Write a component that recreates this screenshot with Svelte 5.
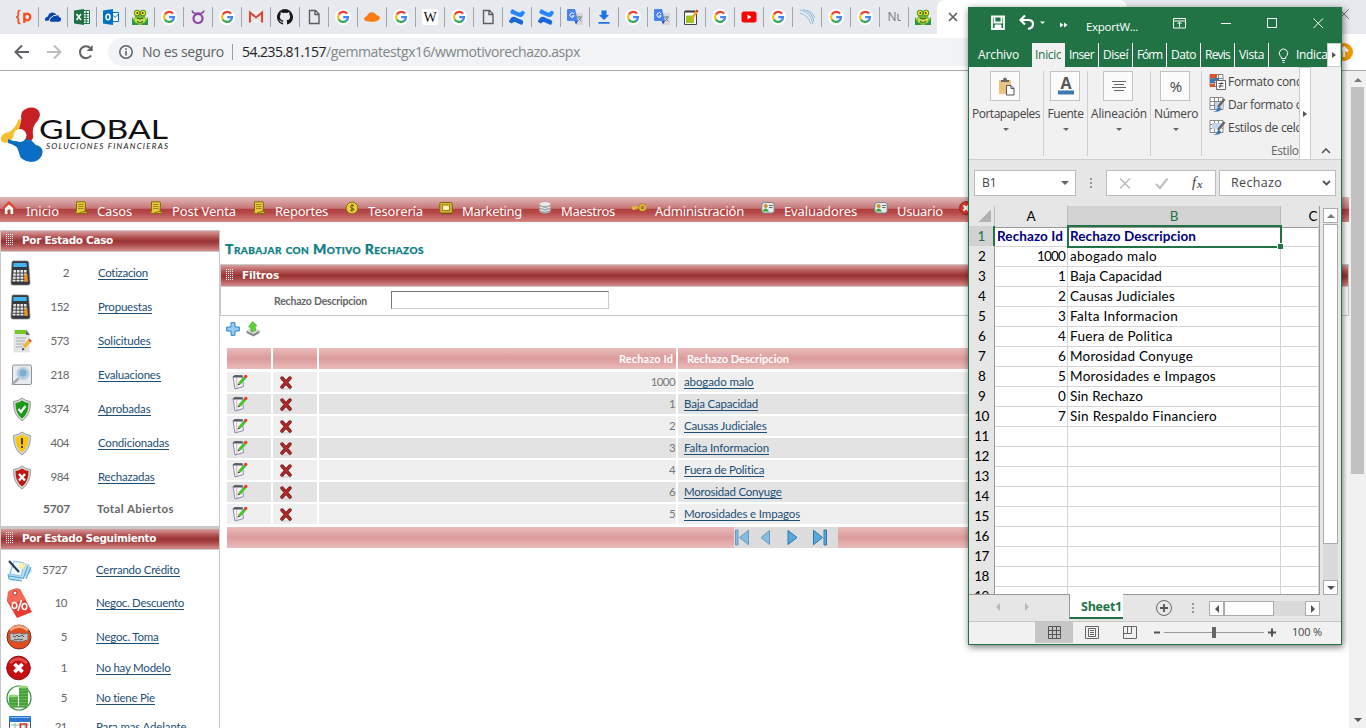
<script>
  const tabs = ['p', 'cloud', 'excel', 'outlook', 'frog', 'g', 'gene', 'g', 'gmail', 'github', 'file', 'g', 'flare', 'g', 'wiki', 'g', 'file', 'conf', 'conf', 'trans', 'down', 'g', 'trans', 'notes', 'g', 'tube', 'g', 'lines', 'g', 'g', 'nu', 'frog'];
  const menu = [
    ['home', 'Inicio', 33], ['scroll', 'Casos', 35], ['scroll', 'Post Venta', 64], ['scroll', 'Reportes', 53],
    ['coin', 'Tesorería', 55], ['screen', 'Marketing', 60], ['db', 'Maestros', 54], ['key', 'Administración', 89],
    ['card', 'Evaluadores', 73], ['card', 'Usuario', 46], ['exit', '', 0]
  ];
  const casos = [
    ['calc', '2', 'Cotizacion', 50], ['calc', '152', 'Propuestas', 54], ['doc', '573', 'Solicitudes', 52.5],
    ['search', '218', 'Evaluaciones', 62.5], ['ok', '3374', 'Aprobadas', 52.5], ['warn', '404', 'Condicionadas', 71],
    ['bad', '984', 'Rechazadas', 56.5]
  ];
  const seguimiento = [
    ['pen', '5727', 'Cerrando Crédito', 83.5], ['tag', '10', 'Negoc. Descuento', 88], ['deal', '5', 'Negoc. Toma', 62.5],
    ['cross', '1', 'No hay Modelo', 74.5], ['money', '5', 'No tiene Pie', 59], ['cal', '21', 'Para mas Adelante', 90.5]
  ];
  const rechazos = [
    ['1000', 'abogado malo', 69.5, 87], ['1', 'Baja Capacidad', 74, 92], ['2', 'Causas Judiciales', 82.5, 105],
    ['3', 'Falta Informacion', 85, 108], ['4', 'Fuera de Politica', 80.5, 103], ['6', 'Morosidad Conyuge', 97.5, 123],
    ['5', 'Morosidades e Impagos', 116, 146], ['0', 'Sin Rechazo', 0, 73], ['7', 'Sin Respaldo Financiero', 0, 147]
  ];
  const ribbonTabs = ['Inser', 'Diseí', 'Fórm', 'Dato', 'Revis', 'Vista'];
  const groups = [
    ['paste', 'Portapapeles', 68], ['font', 'Fuente', 36], ['align', 'Alineación', 56], ['pct', 'Número', 44]
  ];
  const estilos = [['cond', 'Formato cond', 75], ['table', 'Dar formato co', 80], ['cell', 'Estilos de celda', 81]];
  const sheetRows = Array.from({ length: 19 }, (_, i) => i + 1);

  // Spreads the letters of a label so that it takes the given width.
  function fit(node, width) {
    const natural = node.getBoundingClientRect().width;
    const n = node.textContent.length;
    if (n && width) node.style.letterSpacing = (width - natural) / n + 'px';
  }
</script>

{#snippet fav(name)}
  {#if name === 'nu'}
    <span class="nu">Nu</span>
  {:else}
  <svg class="fav" viewBox="0 0 16 16">
    {#if name === 'p'}
      <path d="M4.5 1.5H4Q2.3 1.5 2.3 3.3V6Q2.3 7.5.7 8Q2.3 8.500 2.300 10V12.700Q2.300 14.500 4 14.500H4.500" fill="none" stroke="#f4511e" stroke-width="1.700" />
      <path d="M8.300 14V3.700M8.300 7.500a3 3.300 0 1 1 0 1" fill="none" stroke="#f4511e" stroke-width="2.300" />
    {:else if name === 'cloud'}
      <path d="M0 11.500Q-.5 8 3 7.500Q3.500 4 7 3.500Q10 3 11.500 6Q14 6 14 8Q16.500 8.500 16 11Q15.500 12.800 14 12.800H6Q4.500 12.500 4.800 10.500Q3 12.500 0 11.500Z" fill="#0a45ac" />
      <path d="M4.700 11Q4.500 8.500 7 8Q8.500 5.500 11.500 6.500" fill="none" stroke="#e7eaed" />
    {:else if name === 'excel'}
      <path d="M9 1.500h6.500v13H9z" fill="#fff" stroke="#1e7145" /><path d="M10 4.500h4.500M10 7h4.500M10 9.500h4.500M10 12h4.500M12.200 2v12" stroke="#1e7145" /><path d="M0 1.500 10 0v16L0 14.500z" fill="#1e7145" /><path d="m2.500 5 4.500 6M7 5l-4.500 6" stroke="#fff" stroke-width="1.500" />
    {:else if name === 'outlook'}
      <path d="M9 3.500h6.500v9H9z" fill="#fff" stroke="#0072c6" /><path d="m9 5.500 3 3 4-4" fill="none" stroke="#0072c6" /><path d="M0 1.500 10 0v16L0 14.500z" fill="#0072c6" /><ellipse cx="5" cy="8" rx="2" ry="2.700" fill="none" stroke="#fff" stroke-width="1.500" />
    {:else if name === 'frog'}
      <path d="M3 2h10v6l3 3v5H0v-5l3-3z" fill="#78b72b" /><path d="m0 8 6 8H0zM16 8l-6 8h6z" fill="#2c9445" /><path d="M1 9.500 4 14M15 9.500 12 14" stroke="#8fdc3c" /><path d="M2 8q6 5 12 0l-2 6-2-2-2 4-2-4-2 2z" fill="#d3dc4c" /><circle cx="5" cy="4" r="3.200" fill="#4e9a28" /><circle cx="11" cy="4" r="3.200" fill="#4e9a28" /><circle cx="5" cy="4" r="2.200" fill="#ffe11c" /><circle cx="11" cy="4" r="2.200" fill="#ffe11c" /><circle cx="5.300" cy="4" r=".9" fill="#332" /><circle cx="10.700" cy="4" r=".9" fill="#332" /><path d="M5 9q3 2 6 0M5 12l3 2 3-2" stroke="#27692c" fill="none" />
    {:else if name === 'g'}
      <circle cx="8" cy="8" r="8" fill="#fff" /><path d="M12.100 4.600A5 5 0 0 0 3.800 5.500" fill="none" stroke="#ea4335" stroke-width="2.200" /><path d="M3.800 5.500A5 5 0 0 0 3.800 10.600" fill="none" stroke="#fbbc05" stroke-width="2.200" /><path d="M3.800 10.500A5 5 0 0 0 11.400 11.700" fill="none" stroke="#34a853" stroke-width="2.200" /><path d="M8.200 8.200H13Q13 10.300 11.300 11.700" fill="none" stroke="#4285f4" stroke-width="2.200" />
    {:else if name === 'gene'}
      <circle cx="8" cy="9.500" r="4.500" fill="none" stroke="#8b47a8" stroke-width="2.200" /><path d="M2 1.500Q2.500 4 5 4.500M14 1.500Q13.500 4 11 4.500M5 4.500q3-1 6 0" stroke="#8b47a8" stroke-width="1.600" fill="none" />
    {:else if name === 'gmail'}
      <path d="M1 2.500h14v11H1z" fill="#f4f4f4" /><path d="M2 13.500V3.500l6 5 6-5v10" fill="none" stroke="#d54b3d" stroke-width="2.200" /><path d="m3 13 4-5M13 13 9 8" stroke="#ccc" />
    {:else if name === 'github'}
      <path d="M8 0a8 8 0 0 0-2.500 15.600c.4 0 .5-.2.500-.5v-1.500c-2.200.5-2.700-1-2.700-1-.4-.9-.9-1.100-.9-1.100-.7-.5.1-.5.1-.5.8.1 1.200.8 1.200.8.700 1.300 1.900.9 2.300.7 0-.5.300-.9.500-1.100C4.700 11.200 2.900 10.500 2.900 7.500c0-.9.300-1.600.8-2.100-.1-.2-.4-1 .1-2.200 0 0 .7-.2 2.200.8a8 8 0 0 1 4 0c1.500-1 2.200-.8 2.200-.8.500 1.200.2 2 .1 2.200.5.500.8 1.200.8 2.100 0 3-1.800 3.700-3.600 3.900.3.200.5.700.5 1.500v2.200c0 .3.100.5.500.5A8 8 0 0 0 8 0Z" fill="#191717" />
    {:else if name === 'file'}
      <path d="M3.500 1.500h6l3.500 3.500v9.500H3.500zM9 1.500V5.500h4" fill="none" stroke="#5a5f63" stroke-width="1.400" />
    {:else if name === 'flare'}
      <path d="M0 9.500Q.5 7.500 3 7Q4.500 3 8 3.200Q11 3.300 12.500 6Q15.500 6.500 16 9Q15.500 12 9 12.800Q5 13 2 12Q0 11 0 9.500Z" fill="#fb7a12" />
    {:else if name === 'wiki'}
      <rect width="16" height="16" rx="2" fill="#fff" /><text x="8" y="12.500" class="w">W</text>
    {:else if name === 'conf'}
      <path d="M0 12 2 9Q4 6.500 8 9L13 11Q15 12 14 14L13 16Q8 14 6 13Q4 12.500 3 14.500L0 13Z" fill="#1868db" /><path d="M16 3.500 14 7Q12 9 8 7L2 4.500Q1 4 1.500 2.500L3 0Q8 2.500 10 3.500Q12 4 13 1.500L16 3Z" fill="#2684ff" />
    {:else if name === 'trans'}
      <path d="M5 4h11v12H9z" fill="#d5d7db" /><path d="M1 0h7l3 12H1Q0 12 0 11V1Q0 0 1 0Z" fill="#4a83ee" /><path d="M7.500 12h3.500L9 15.500z" fill="#3352ab" /><path d="M7 4.800a2.200 2.200 0 1 0 .2 2H5.200" fill="none" stroke="#fff" /><path d="M10 8h5M12.500 7v1M14 8q-1 3-3 4M11.500 9q1 2 3 3" fill="none" stroke="#788" />
    {:else if name === 'down'}
      <path d="M5.500 1.500h5V6H13L8 11 3 6h2.500zM2.500 13h11v1.700h-11z" fill="#1a73e8" />
    {:else if name === 'notes'}
      <path d="M1.500 2.500h12v13h-12z" fill="#fff" stroke="#444" /><path d="M3 6.500h8v7.500H3z" fill="#9cc51e" /><path d="M3 1v3M5 1v3M7 1v3M9 1v3M11 1v3" stroke="#333" /><path d="m8 11 6-9" stroke="#e9a82c" stroke-width="2.500" /><path d="m13.500 2.700 1-1.500" stroke="#b33" stroke-width="2.500" />
    {:else if name === 'tube'}
      <rect x=".5" y="2.500" width="15" height="11" rx="2.500" fill="#f00" /><path d="M6.500 5.500v5l4-2.500z" fill="#fff" />
    {:else if name === 'lines'}
      <path d="M1 1q11 2 13 14M4 .5q9 2 11 12M1 4q8 2 11 11M8 1q6 2 8 8" fill="none" stroke="#6fabd6" stroke-width=".7" />
    {/if}
  </svg>
  {/if}
{/snippet}

{#snippet micon(name)}
  <svg class="micon" viewBox="0 0 14 14">
    {#if name === 'home'}
      <path d="M1.500 7v6.500h9V7L6 3z" fill="#fff" stroke="#a44" stroke-width=".7" /><path d="M.3 7.200 6 1.500l6 5.700" fill="none" stroke="#e2492c" stroke-width="2.200" stroke-linecap="round" /><path d="M4.500 8.500h3v5h-3z" fill="#b0442f" />
    {:else if name === 'scroll'}
      <path d="M2.500.8h7.500q2 0 1.500 2L11 10.500q2.500 0 2.300 2H4.500q-3 0-3-1.500l1-1z" fill="#e3c93a" stroke="#85680d" /><path d="M4 3.500h5.500M4 5.500h5.500M4 7.500h5.500" stroke="#a5861b" /><path d="M4.500 12.500q2-1.500 6.500-2" stroke="#8a6f11" fill="none" />
    {:else if name === 'coin'}
      <circle cx="7" cy="7" r="5.800" fill="#e9cf3c" stroke="#8f7412" /><path d="M9 4.500Q5.500 3.500 5.500 5.500T8.500 8T5 9.500M7 3v8" stroke="#6d5811" fill="none" />
    {:else if name === 'screen'}
      <rect x=".8" y="1.500" width="12.400" height="10.500" rx="1.500" fill="#d9b82f" stroke="#80640e" /><rect x="3.500" y="4" width="7" height="5.500" fill="#fdf1b5" stroke="#9a7b19" /><path d="M2 12.800h10" stroke="#6b541a" />
    {:else if name === 'db'}
      <path d="M1.500 3v8q5.500 3.500 11 0V3z" fill="#a4a8ab" /><ellipse cx="7" cy="3" rx="5.500" ry="2" fill="#e7eaeb" /><path d="M1.500 6q5.500 3 11 0M1.500 8.700q5.500 3 11 0" fill="none" stroke="#eee" />
    {:else if name === 'key'}
      <path d="M0 6.500h8M1.500 7v2M3.500 7v1.500" stroke="#e2bb35" stroke-width="2" /><circle cx="10.500" cy="6.500" r="2.600" fill="none" stroke="#8f6f16" stroke-width="3" /><circle cx="10.500" cy="6.500" r="2.600" fill="none" stroke="#e2bb35" stroke-width="1.800" />
    {:else if name === 'card'}
      <rect x=".8" y="1.500" width="12.400" height="10.500" rx="2.500" fill="#e7ebed" stroke="#76838a" /><circle cx="4.700" cy="5" r="2" fill="#c79332" /><path d="M1.500 10.500q3-6 6.500 0z" fill="#3aa22e" /><path d="M8 4.500h4M8 6.500h3.500" stroke="#68747b" />
    {:else if name === 'exit'}
      <circle cx="7" cy="7" r="6.300" fill="#dc3a2b" stroke="#8e1f18" /><path d="m4.500 4.500 5 5m0-5-5 5" stroke="#fff" stroke-width="2" />
    {/if}
  </svg>
{/snippet}

{#snippet big(name)}
  <svg class="big" viewBox="0 0 26 28">
    {#if name === 'calc'}
      <path d="M7 2h14q1.500 0 1.600 1.500L24 24q0 2-2 2H7q-2 0-2-2L6 3.500Q6 2 7 2z" fill="#36383b" stroke="#77797c" stroke-width=".7" /><path d="M7.500 4h13l.3 4H7.200z" fill="#43b4ee" /><path d="M7.500 11h13l.8 11.500H6.500z" fill="#e8e8e8" /><path d="M7 14h14.500M6.500 17.200h15M6.500 20.300h15M10.500 11 10 23M14 11v12M17.500 11l.5 12" stroke="#36383b" stroke-width=".9" /><path d="M18.500 15.500h3l.4 7h-3.400z" fill="#f28c17" />
    {:else if name === 'doc'}
      <path d="M8 3h13l2 3v19H8z" fill="#e4e5e7" stroke="#d0d1d4" stroke-width=".5" /><path d="M9 3h11v4H9z" fill="#78c623" /><path d="m20 3 4 5h-4z" fill="#667" /><path d="M10 11h10M10 14h9M10 17h8M10 20h6" stroke="#a9acb3" /><path d="m18 20 5.500-6" stroke="#f3b52d" stroke-width="3.500" /><path d="m23.300 14.300 1.400-1.500" stroke="#e05246" stroke-width="3.500" /><path d="m16 23.500.7-3 2 2z" fill="#333" />
    {:else if name === 'search'}
      <rect x="6.500" y="4" width="19" height="19.500" rx="1.500" fill="#e7eaee" stroke="#8d9499" /><path d="M6.500 23 12 18" stroke="#a6acb1" stroke-width="2.500" stroke-linecap="round" /><circle cx="17" cy="12.500" r="5.800" fill="#a8cde4" stroke="#c0d0da" stroke-width="1.500" /><circle cx="17" cy="12" r="3.500" fill="#7eaece" />
    {:else if name === 'ok' || name === 'warn' || name === 'bad'}
      <path d="M16 3q3.500 3 8.500 3.500Q25 20 16 26Q7 20 7.500 6.500Q12.500 6 16 3Z" fill="#d5d6d7" stroke="#88898b" stroke-width=".8" /><path d="M16 5.500q3 2 6.500 2.500Q22.800 18.500 16 23.500Q9.200 18.500 9.500 8Q13 7.500 16 5.500Z" fill={name === 'ok' ? '#1c9a17' : name === 'warn' ? '#f6c613' : '#bb1714'} />
      {#if name === 'ok'}<path d="m12.500 14 2.500 3 4.500-6" fill="none" stroke="#fff" stroke-width="2.200" />
      {:else if name === 'warn'}<path d="M16 9v6.500M16 17v2" stroke="#3a2f14" stroke-width="1.800" />
      {:else}<path d="m13 11 6 6.500m0-6.500-6 6.500" stroke="#fff" stroke-width="2.500" />{/if}
    {/if}
  </svg>
{/snippet}

{#snippet seg(name)}
  <svg class="seg" viewBox="0 0 28 32">
    {#if name === 'pen'}
      <path d="M4 22 9 8l16 2 3 7-8 8-12 2z" fill="#b6ddf2" /><path d="m6 20 4-13 10 2-3 13z" fill="#eff8fd" stroke="#8fc0dd" /><path d="m5 22 13 2M19 25l5-13M22 25l5-12M4 20l1 5 13 2" stroke="#489fce" fill="none" /><path d="m16 9 5 1-1 5-5-1z" fill="#f9f0a0" /><path d="m5 7 10 11" stroke="#24394e" stroke-width="2" />
    {:else if name === 'tag'}
      <path d="M4 5q7-5 12-3l12 23-15 6L3 14z" fill="#e93c31" /><path d="M4 5q7-5 12-3l6 11-18 4z" fill="#f26a56" /><circle cx="11" cy="6" r="2" fill="#fff" stroke="#a33" /><ellipse cx="10.500" cy="18.500" rx="2.300" ry="3" fill="none" stroke="#fff" stroke-width="1.600" /><ellipse cx="20.500" cy="19.500" rx="2.300" ry="3" fill="none" stroke="#fff" stroke-width="1.600" /><path d="m14 24 3.500-11" stroke="#fff" stroke-width="1.700" />
    {:else if name === 'deal'}
      <circle cx="15" cy="16" r="12" fill="#e04d20" stroke="#822b18" /><path d="M6 9q9-7 18 0" stroke="#f7a57f" stroke-width="3" fill="none" /><path d="m6 12 4 1 5-1 5 1 4-1v7l-4 1-5 1-5-1-4-1z" fill="#c4c4c4" stroke="#666" stroke-width=".8" /><path d="m9 15 2 1 2-2 2 2 3-2 2 2M10 18l2 1 2-1 2 1 3-1" stroke="#444" stroke-width=".9" fill="none" />
    {:else if name === 'cross'}
      <circle cx="14.500" cy="16" r="11.800" fill="#c40f13" stroke="#871014" /><path d="M6 11q8-8 17 0" fill="none" stroke="#e34b48" stroke-width="3" /><path d="m10.500 12 8 8m0-8-8 8" stroke="#fff" stroke-width="3.800" />
    {:else if name === 'money'}
      <circle cx="15" cy="16" r="12" fill="#fff" stroke="#368e37" stroke-width="1.200" /><path d="M5 15h9v10H5zM15 6h9v19h-9z" fill="#67bd4f" /><path d="M5 16h9M5 19h9M6 22h8M15 7h9M15 10h9M15 13h9M15 16h9M15 19h9M15 22h9M7 25h16" stroke="#26812b" /><ellipse cx="9.500" cy="14" rx="5" ry="1.500" fill="#94d779" /><ellipse cx="19.500" cy="5" rx="4.500" ry="1.500" fill="#94d779" />
    {:else if name === 'cal'}
      <rect x="5.500" y="6" width="21" height="23" rx="2" fill="#fff" stroke="#456" /><path d="M5 5h22v6H5z" fill="#2a75d0" /><path d="M6 6.500h20" stroke="#83bdf2" /><path d="M7 14h18M7 18h18M11 12v12M16 12v12M21 12v12" stroke="#8ba" /><path d="M16.500 13h6v5h-6z" fill="none" stroke="#d33" stroke-width="1.500" />
    {/if}
  </svg>
{/snippet}

{#snippet dots()}
  <svg class="dots" viewBox="0 0 8 12"><path d="M.5 0v12M2.500 0v12M4.500 0v12M6.500 0v12" stroke="#fbeeee" stroke-dasharray="1 1" /></svg>
{/snippet}

<div class="screen">
  <div class="strip">
    {#each tabs as t}<div class="tab">{@render fav(t)}</div>{/each}
    <div class="active"><svg width="10" height="10" viewBox="0 0 10 10"><path d="m1 1 8 8m0-8-8 8" stroke="#5f6368" stroke-width="1.700" /></svg></div>
    <svg class="winx" viewBox="0 0 10 10"><path d="m0 0 10 10m0-10L0 10" stroke="#777" /></svg>
  </div>
  <div class="toolbar">
    <svg class="nav" viewBox="0 0 16 16"><path d="M15 8H2M8 1.500 1.500 8 8 14.500" fill="none" stroke="#5f6368" stroke-width="2" /></svg>
    <svg class="nav" viewBox="0 0 16 16"><path d="M1 8h13M8 1.500 14.500 8 8 14.500" fill="none" stroke="#bbbdc0" stroke-width="2" /></svg>
    <svg class="nav" viewBox="0 0 16 16"><path d="M13 11.500A6 6 0 1 1 12.500 4.200" fill="none" stroke="#5f6368" stroke-width="2" /><path d="M14.700 1v6h-6z" fill="#5f6368" /></svg>
    <div class="pill">
      <svg width="14" height="14" viewBox="0 0 14 14"><circle cx="7" cy="7" r="6.200" fill="none" stroke="#5f6368" stroke-width="1.500" /><path d="M7 6v4.500M7 3.300v1.600" stroke="#5f6368" stroke-width="1.600" /></svg>
      <span class="secure"><span use:fit={82}>No es seguro</span></span>
      <span class="url"><b use:fit={84}>54.235.81.157</b><span use:fit={254}>/gemmatestgx16/wwmotivorechazo.aspx</span></span>
    </div>
    <div class="orange"><svg width="12" height="12" viewBox="0 0 12 12"><path d="M6 1v10M2 5.500 6 1.500l4 4" fill="none" stroke="#fff" stroke-width="2.500" /></svg></div>
  </div>

  <div class="view">
    <div class="page">
      <div class="brand">
        <svg class="mark" viewBox="0 0 44 56">
          <path d="M22 5Q26 0 33 .500Q40 2 40 8Q39 13 35 17Q32 22 33 28Q34 33 29 35Q20 36 20 28Q18 23 20 17Q22 13 21 9Z" fill="#c62026" />
          <path d="M21 13Q20 24 14 29Q10 36 5 36Q0 35 1 31Q2 26 9 25Q15 21 17 16Q19 10 21 13Z" fill="#f6c034" />
          <path d="M8 32Q16 36 24 33Q30 31 33 35Q35 38 39 39Q44 42 42 48Q39 55 31 55Q20 54 19 46Q18 38 8 36Z" fill="#0a6fc2" />
          <circle cx="20" cy="28.500" r="6.500" fill="#fff" />
        </svg>
        <svg class="names" viewBox="0 0 131 50">
          <text x="0" y="31.500" class="global" textLength="129" lengthAdjust="spacingAndGlyphs">GLOBAL</text>
          <text x="7" y="41.500" class="sub" textLength="122" lengthAdjust="spacing">SOLUCIONES FINANCIERAS</text>
        </svg>
      </div>
      <nav class="menu">
        {#each menu as [ic, label, w]}
          <a class="item" href="#top">{@render micon(ic)}<span use:fit={w}>{label}</span></a>
        {/each}
      </nav>
      <div class="cols">
        <aside>
          <section class="panel">
            <h3>{@render dots()}<span use:fit={91}>Por Estado Caso</span></h3>
            <div class="casos">
              {#each casos as [ic, n, label, w]}
                <div class="line">{@render big(ic)}<span class="num">{n}</span><a href="#caso"><span use:fit={w}>{label}</span></a></div>
              {/each}
              <div class="line total"><i></i><span class="num">5707</span><span class="tt" use:fit={77}>Total Abiertos</span></div>
            </div>
          </section>
          <section class="panel second">
            <h3>{@render dots()}<span use:fit={134}>Por Estado Seguimiento</span></h3>
            <div class="segs">
              {#each seguimiento as [ic, n, label, w]}
                <div class="line">{@render seg(ic)}<span class="num">{n}</span><a href="#seg"><span use:fit={w}>{label}</span></a></div>
              {/each}
            </div>
          </section>
        </aside>
        <main>
          <h1><span use:fit={199}>Trabajar con Motivo Rechazos</span></h1>
          <section class="panel filter">
            <h3>{@render dots()}<span use:fit={37}>Filtros</span></h3>
            <div class="field"><label for="desc"><span use:fit={93}>Rechazo Descripcion</span></label><input id="desc" /></div>
          </section>
          <div class="actions">
            <svg width="14" height="14" viewBox="0 0 14 14"><path d="M5 .7h4V5h4.300v4H9v4.300H5V9H.7V5H5z" fill="#9ccbf3" stroke="#2f83cf" stroke-linejoin="round" /></svg>
            <svg width="14" height="16" viewBox="0 0 14 16"><path d="m.5 10 6-3.500 7 3v2.500l-6 3.500-7-3.500z" fill="#888" /><path d="m.5 10 6-3.500 7 3-6 3.500z" fill="#ddd" /><path d="M6.500.5 11 4.500l-1.700.8.2 4.500-4.500 1-.3-4.500L2.500 6z" fill="#5bd33a" stroke="#3eaa27" stroke-width=".6" /></svg>
          </div>
          <div class="table">
            <div class="tr th"><span></span><span></span><span class="id"><b use:fit={54}>Rechazo Id</b></span><span class="desc"><b use:fit={102}>Rechazo Descripcion</b></span></div>
            {#each rechazos.slice(0, 7) as [id, label, w]}
              <div class="tr">
                <span class="edit"><svg width="16" height="16" viewBox="0 0 16 16"><path d="M1 2.500 10 1.500l1.500 11L3 15z" fill="#f5f6fc" stroke="#858bad" /><path d="M1 3.500q0-2 2-2.500l8 .5-1 2z" fill="#55585d" /><path d="M4.500 4 5 14" stroke="#f0aaa6" /><path d="m7.500 9.500 5.500-6" stroke="#45c52c" stroke-width="3" /><circle cx="13.700" cy="2.500" r="1.800" fill="#e2492e" /><path d="m5.500 11.500 1-2.500 2 1.500z" fill="#27641c" /></svg></span>
                <span class="del"><svg width="12" height="14" viewBox="0 0 12 14"><path d="M1 13h10" stroke="#ccc" /><path d="m2 2 8 9m0-9-8 9" stroke="#6e1616" stroke-width="3.400" stroke-linecap="round" /><path d="m2 2 8 9m0-9-8 9" stroke="#b32a2a" stroke-width="2" stroke-linecap="round" /></svg></span>
                <span class="id">{id}</span><span class="desc"><a href="#row"><span use:fit={w}>{label}</span></a></span>
              </div>
            {/each}
            <div class="foot">
              <div class="pager">
                <svg class="dim" viewBox="0 0 16 16"><path d="M1.500.5h2.500v15H1.500zM14.500.8v14.400L5.500 8z" /></svg>
                <svg class="dim" viewBox="0 0 16 16"><path d="M9.500 1v14L1 8z" /></svg>
                <svg viewBox="0 0 16 16"><path d="M2 1v14L11 8z" /></svg>
                <svg viewBox="0 0 16 16"><path d="M12 .5h2.500v15H12zM1.500.8v14.400L10.500 8z" /></svg>
              </div>
            </div>
          </div>
        </main>
      </div>
    </div>
    <div class="scroll"><i class="up"></i><div class="thumb"></div><i class="dn"></i></div>
  </div>

  <div class="win">
    <header class="title">
      <svg viewBox="0 0 372 36">
        <g fill="none" stroke="#fff">
          <path d="M23 9.500h12v12.500H23zM25.500 10v5.500h7V10" stroke-width="1.800" /><path d="M26 22v-4h6v4" fill="#fff" />
          <path d="M56 8.500 51.500 13l4.500 4.500M52 13h7q5 0 5 4t-5 5" stroke-width="2.200" />
          <path d="M204.500 11.500h12v9.500h-12zM204.500 14h12M210.500 20v-5M208.500 17l2-2 2 2" />
          <path d="M252 16.500h10M298.500 11.500h9v9h-9zM344.500 11.500l9.500 9.500m0-9.500-9.500 9.500" />
        </g>
        <path d="M71 14.500h5l-2.500 2.500zM91 15.500l3.500 2.500-3.500 2.500zM95 15.500l3.500 2.500-3.500 2.500z" fill="#fff" />
      </svg>
      <span class="name"><span use:fit={52}>ExportW...</span></span>
    </header>
    <div class="rtabs">
      <span class="archivo"><span use:fit={41}>Archivo</span></span>
      <span class="inicio"><span class="clip"><span use:fit={28}>Inicio</span></span></span>
      {#each ribbonTabs as t}<span class="rt"><span use:fit={25}>{t}</span></span>{/each}
      <span class="indica"><svg width="11" height="15" viewBox="0 0 11 15"><path d="M3.500 10.500Q3.500 8.500 2 7.500A4.200 4.200 0 1 1 9 7.500Q7.500 8.500 7.500 10.500zM4 12.500h3M4.500 14.500h2" fill="none" stroke="#fff" /></svg><span use:fit={31.500}>Indica</span></span>
      <span class="more"><i></i></span>
    </div>
    <div class="ribbon">
      {#each groups as [ic, label, w], gi}
        <div class="group g{gi}">
          <div class="btn">
            <svg width="28" height="28" viewBox="0 0 28 28">
              {#if ic === 'paste'}<path d="M8 8h12v14H8z" fill="#eac282" /><path d="M10 10V8h2q0-2.500 2-2.500T16 8h2v2z" fill="#666" /><path d="M15.500 13.500h4.500l3 3v6.500h-7.500zM20 13.500v3h3" fill="#fff" stroke="#555" />
              {:else if ic === 'font'}<text x="15" y="17" class="fa">A</text><path d="M7 18.500h16v4H7z" fill="#3e78b3" />
              {:else if ic === 'align'}<path d="M8 9.500h14M10 12.500h10M8 15.500h14M10 18.500h10" stroke="#666" />
              {:else}<text x="15" y="20" class="pc">%</text>{/if}
            </svg>
          </div>
          <div class="gl"><span use:fit={w}>{label}</span></div>
          <i class="car"></i>
        </div>
      {/each}
      <div class="styles">
        {#each estilos as [ic, label, w], si}
          <div class="st">
            <svg width="17" height="17" viewBox="0 0 17 17">
              <path d="M1 1.500h13v12H1zM1 5.500h13M1 9.500h13M5.500 1v12M9.500 1v12" fill="#fff" stroke="#888" />
              {#if si === 0}<path d="M1 1h7v4H1z" fill="#d65532" /><path d="M1 6h4v4H1zM5 5h5v3H5z" fill="#3e78b3" /><path d="M1 10.500h5V14H1z" fill="#d65532" /><path d="M7.500 7.500h9v9h-9z" fill="#fff" stroke="#666" /><path d="M9.500 10.500h5M9.500 13h5M13 9l-2.500 6" stroke="#555" />
              {:else}<path d={si === 1 ? 'M6 6h8v7H6z' : 'M3 4h10v6H3z'} fill="#c3d5ea" /><path d="m9 11 6.500-8" stroke="#666" stroke-width="2.500" /><path d="M4 15.500q4 0 4-3 2-2.500 4 0 0 4-8 3z" fill="#3e78b3" />{/if}
            </svg>
            <span use:fit={w}>{label}</span>
          </div>
        {/each}
        <div class="estilo"><span use:fit={33}>Estilos</span></div>
      </div>
      <span class="rmore"><i></i></span>
      <svg class="chev" viewBox="0 0 10 6"><path d="m1 5 4-4 4 4" fill="none" stroke="#555" stroke-width="1.600" /></svg>
    </div>
    <div class="fbar">
      <div class="box nb"><span use:fit={14.500}>B1</span><i class="car"></i></div>
      <div class="vd"></div>
      <div class="box fx">
        <svg width="108" height="24" viewBox="0 0 108 24"><path d="m13 7.500 10 10m0-10-10 10" stroke="#bbb" stroke-width="1.500" /><path d="m49 13 4 4 7.500-9.500" fill="none" stroke="#c0c0c0" stroke-width="2.200" /><text x="85" y="16" class="f">f</text><text x="90" y="17" class="x">x</text></svg>
      </div>
      <div class="box val"><span use:fit={51}>Rechazo</span><svg width="9" height="6" viewBox="0 0 9 6"><path d="m1 1 3.500 3.500L8 1" fill="none" stroke="#555" stroke-width="1.800" /></svg></div>
    </div>
    <div class="body">
      <div class="sheet">
        <div class="sr hd"><span class="corner"><i></i></span><span>A</span><span class="sel">B</span><span class="c">C</span></div>
        {#each sheetRows as n}
          <div class="sr" class:first={n === 1}>
            <span class="rh">{n}</span>
            {#if n === 1}
              <span class="ca"><b use:fit={66}>Rechazo Id</b></span><span class="cb"><b use:fit={126}>Rechazo Descripcion</b><i class="hdl"></i></span>
            {:else}
              <span class="ca">{rechazos[n - 2]?.[0] ?? ''}</span>
              <span class="cb">{#if rechazos[n - 2]}<span use:fit={rechazos[n - 2][3]}>{rechazos[n - 2][1]}</span>{/if}</span>
            {/if}
            <span class="cc"></span>
          </div>
        {/each}
      </div>
      <div class="vs"><span class="b"><i class="up"></i></span><span class="t"></span><span class="k"></span><span class="b"><i class="dn"></i></span></div>
    </div>
    <div class="sheets">
      <div class="arrows"><i class="l"></i><i class="r"></i></div>
      <div class="s1"><span use:fit={41}>Sheet1</span></div>
      <svg class="plus" viewBox="0 0 18 18"><circle cx="9" cy="9" r="7.500" fill="none" stroke="#666" /><path d="M9 5v8M5 9h8" stroke="#555" stroke-width="1.800" /></svg>
      <div class="vd"></div>
      <div class="hs"><span class="b"><i class="l"></i></span><span class="t"></span><span class="k"></span><span class="b"><i class="r"></i></span></div>
    </div>
    <footer>
      <div class="views">
        <span class="on"><svg width="13" height="13" viewBox="0 0 13 13"><path d="M.5.5h12v12H.5zM.5 4.500h12M.5 8.500h12M4.500.5v12M8.500.5v12" fill="none" stroke="#555" /></svg></span>
        <span><svg width="14" height="13" viewBox="0 0 14 13"><path d="M.5.5h13v12H.5zM3.500 2.500h7v8h-7zM5 4.500h4M5 6.500h4M5 8.500h4" fill="none" stroke="#666" /></svg></span>
        <span><svg width="14" height="13" viewBox="0 0 14 13"><path d="M.5.5h13v12H.5zM4.500.5v7M8.500.5v7M.5 7.500h8" fill="none" stroke="#666" /></svg></span>
      </div>
      <svg class="zoom" viewBox="0 0 125 13"><path d="M1 6.500h6M115 6.500h8M119 2.500v8" stroke="#555" stroke-width="2" /><path d="M11 6.500h100" stroke="#999" /><path d="M59 1h4v11h-4z" fill="#666" /></svg>
      <span class="zt" use:fit={30}>100 %</span>
    </footer>
  </div>
</div>

<style>
  :global(body) { overflow: hidden; background: #fff; }
  .screen { position: relative; width: 1366px; height: 728px; overflow: hidden; background: #fff; box-sizing: border-box; }
  .screen :global(*) { box-sizing: border-box; }
  svg { display: block; flex: none; }
  span, b { white-space: nowrap; }
  .strip { display: flex; height: 34px; padding-left: 10px; background: #e6e9ed; }
  .tab { width: 29px; height: 20px; margin-top: 7px; border-right: 1px solid #a2a6aa; display: flex; align-items: center; justify-content: center; flex: none; }
  .tab:nth-child(32) { border-right-color: transparent; }
  .fav { width: 16px; height: 16px; }
  .w { font: 400 14px "Liberation Serif", serif; text-anchor: middle; fill: #111; }
  .nu { width: 13px; overflow: hidden; font: 12px/16px "Open Sans", sans-serif; color: #777; }
  .active { width: 190px; height: 34px; margin-left: -1px; background: #fff; border-radius: 8px 8px 0 0; display: flex; align-items: center; padding-left: 11px; }
  .winx { width: 10px; height: 10px; margin: 9px 17px 0 auto; }
  .toolbar { display: flex; align-items: center; height: 37px; padding: 0 0 1px 14px; border-bottom: 1px solid #a8a8a8; }
  .nav { width: 16px; height: 16px; margin-right: 16px; }
  .pill { display: flex; align-items: center; flex: 1; height: 28px; margin-left: -2px; padding-left: 11px; border-radius: 14px 0 0 14px; background: #f1f3f4; }
  .secure { width: 91px; margin: 0 9px; font: 14px/16px "Open Sans", sans-serif; color: #5f6368; border-right: 1px solid #9a9da0; }
  .url { display: flex; font: 14px/18px "Open Sans", sans-serif; color: #80868b; }
  .url b { font-weight: 400; color: #202124; }
  .orange { width: 18px; height: 18px; margin-right: 13px; border-radius: 50%; background: #f29900; display: grid; place-items: center; }

  .view { display: flex; height: 657px; }
  .page { width: 1349px; overflow: hidden; }
  .scroll { width: 17px; background: #f1f1f1; display: flex; flex-direction: column; align-items: center; padding: 7px 0 6px; }
  .scroll .thumb { width: 13px; height: 387px; margin: 5px 0 auto; background: #c1c1c1; }
  i.up, i.dn, i.l, i.r, .car { display: block; width: 0; height: 0; border: 4px solid transparent; }
  i.up { border-top: 0; border-bottom-color: #777; }
  i.dn { border-bottom: 0; border-top-color: #555; }
  i.l { border-left: 0; border-right-color: #555; }
  i.r { border-right: 0; border-left-color: #555; }
  .brand { display: flex; height: 126px; padding-top: 36px; }
  .mark { width: 44px; height: 56px; }
  .names { width: 131px; height: 50px; margin-left: -5px; }
  .global { font: 26.500px Lato, sans-serif; fill: #111; }
  .sub { font: italic 8px Lato, sans-serif; fill: #222; }
  .menu { display: grid; grid-template-columns: 71px 75px 103px 93px 94px 99px 94px 129px 113px 85px 1fr; height: 25px; padding-left: 3px; background: linear-gradient(#dfb9b9, #c87676 45%, #b04040 49%, #b54848 62%, #d78585); }
  .item { display: flex; gap: 9px; color: #fff; text-decoration: none; font: 13px/28px "Noto Sans", sans-serif; }
  .micon { width: 14px; height: 14px; margin-top: 4px; }

  .cols { display: flex; padding-top: 8px; }
  aside { width: 220px; flex: none; }
  .panel { border: 1px solid #c9c9c9; }
  h3 { display: flex; align-items: center; height: 21px; margin: 0; padding: 0 0 2px 5px; border-bottom: 1px solid #ccc; font: bold 10.500px/18px "DejaVu Sans", sans-serif; color: #fff; background: linear-gradient(#d99d9d, #ad4a4a 35%, #983434 50%, #a84343 65%, #d58c8c); }
  .dots { width: 8px; height: 12px; margin-right: 8px; }
  .line { display: flex; align-items: center; height: 34px; font: 11.500px/16px Lato, sans-serif; color: #666; }
  .line a { margin-left: 29px; }
  a { color: #1d4e75; text-decoration: none; }
  .line a span, .desc a span { border-bottom: 1px solid #1d4e75; display: block; line-height: 13px; }
  .casos { height: 274px; padding-top: 4px; }
  .num { width: 37px; text-align: right; font-size: 11.500px; letter-spacing: -.5px; }
  .total i { width: 31px; }
  .total { height: 30px; font-weight: 700; }
  .total .num { width: 38px; font-weight: 700; font-size: 12px; letter-spacing: -.2px; }
  .tt { margin-left: 27px; }
  .second { border-top-width: 2px; height: 220px; }
  .big { width: 26px; height: 28px; margin: 0 .5px 0 4.500px; }
  .segs { padding-top: 3px; }
  .seg { width: 28px; height: 32px; margin: 0 1px 0 3px; }
  .segs .num { width: 34px; }
  .segs .line:nth-child(2) { height: 32px; }
  .segs .line:nth-child(3) { height: 36px; }
  .segs .line:nth-child(4) { height: 26px; }
  .segs .line:nth-child(6) { height: 24px; }

  main { flex: 1; min-width: 0; }
  h1 { margin: 0; height: 34px; padding: 8px 0 0 5px; font: 900 14px/21px Lato, sans-serif; font-variant: small-caps; color: #0f7f86; -webkit-text-stroke: .25px #0f7f86; }
  .filter { height: 52px; }
  .filter h3 { height: 22px; }
  .field { display: flex; align-items: center; height: 28px; }
  .field label { width: 170px; padding-left: 53px; font: bold 10.500px/14px Lato, sans-serif; color: #666; }
  input { width: 218px; height: 18px; margin-top: -2px; border: 1px solid #ccc; border-top-color: #777; border-left-color: #777; padding: 0; }
  .actions { display: flex; align-items: center; gap: 6px; height: 26px; padding-left: 6px; }
  .table { margin: 6px 0 0 7px; width: 1108px; display: grid; gap: 2px; }
  .tr { display: grid; grid-template-columns: 44px 44px 357px 1fr; gap: 2px; height: 20px; font: 11.500px/20px Lato, sans-serif; color: #777; }
  .tr > span { background: #efefef; overflow: hidden; }
  .tr:nth-child(odd) > span { background: #e3e3e3; }
  .th { height: 22px; color: #fff; line-height: 21px; }
  .tr.th > span { background: linear-gradient(#e9bcbc, #dc9b9b 50%, #e9bcbc); height: 21px; }
  .th b { font-size: 11px; }
  .tr .id { text-align: right; padding-right: 1px; letter-spacing: -.6px; }
  .tr.th .id { padding-right: 3px; letter-spacing: 0; }
  .tr .desc { padding-left: 6px; display: flex; align-items: center; }
  .tr.th .desc { padding-left: 9px; }
  .edit { padding: 2px 0 0 5px; }
  .del { padding: 4px 0 0 7px; }
  .foot { height: 21px; margin-top: 1px; background: linear-gradient(#e9bcbc, #dc9b9b 50%, #e9bcbc); }
  .pager { display: flex; justify-content: space-between; align-items: center; width: 104px; height: 21px; margin-left: 507px; padding: 0 10px 0 0; background: #dcdcdc; }
  .pager svg { width: 16px; height: 17px; fill: #58aadd; stroke: #2e76b0; }
  .pager .dim { opacity: .65; }

  .win { position: absolute; left: 968px; top: 7px; width: 374px; height: 638px; border: 1px solid #217346; background: #e6e6e6; box-shadow: 1px 2px 7px rgba(0, 0, 0, .55); font: 12px/16px "Open Sans", sans-serif; color: #444; }
  .title { display: grid; height: 35px; background: #217346; color: #fff; }
  .title > * { grid-area: 1 / 1; }
  .title svg { width: 372px; height: 36px; margin-top: -1px; }
  .name { padding: 11px 0 0 117px; font-size: 11.500px; }
  .rtabs { display: flex; align-items: stretch; height: 24px; background: #217346; color: #fff; line-height: 24px; }
  .rtabs > span { flex: none; }
  .archivo { width: 63px; padding-left: 9px; }
  .inicio { width: 33px; padding-left: 3px; background: #f1f1f1; color: #217346; }
  .clip { display: block; width: 26px; overflow: hidden; }
  .rt { width: 34px; padding-left: 4px; border-right: 1px solid #fff; }
  .indica { display: flex; align-items: center; gap: 7px; width: 58px; padding-left: 9px; overflow: hidden; }
  .more, .rmore { background: #fff; border: 1px solid #ccc; display: grid; place-items: center; flex: none; width: 14px; }
  .more i, .rmore i { border: 3px solid transparent; border-right: 0; border-left: 4px solid #555; }
  .ribbon { display: flex; height: 93px; background: #f1f1f1; border-bottom: 1px solid #cfcfcf; }
  .group { display: flex; flex-direction: column; align-items: center; height: 85px; margin-top: 4px; border-right: 1px solid #cfcfcf; flex: none; }
  .g0 { width: 75px; } .g1 { width: 44px; } .g2 { width: 63px; } .g3 { width: 51px; }
  .btn { width: 30px; height: 30px; margin-right: 2px; border: 1px solid #c3c3c3; background: #fbfbfb; }
  .gl { margin-top: 5px; }
  .car { border-width: 3.500px; border-bottom: 0; border-top-color: #666; margin-top: 6px; }
  .fa { font: bold 16px "Open Sans", sans-serif; text-anchor: middle; fill: #555; }
  .pc { font: 15px "Open Sans", sans-serif; text-anchor: middle; fill: #444; }
  .styles { width: 98px; overflow: hidden; padding: 3px 0 0 7px; flex: none; }
  .st { display: flex; align-items: center; gap: 2px; height: 23px; }
  .estilo { padding-left: 62px; line-height: 24px; color: #666; }
  .rmore { width: 12px; margin: 0 0 -1px -1px; }
  .chev { width: 10px; height: 6px; margin: 81px 0 0 10px; }
  .fbar { display: flex; height: 46px; padding: 10px 0 0 5px; }
  .box { height: 26px; border: 1px solid #bcbcbc; background: #fff; display: flex; align-items: center; }
  .nb { width: 102px; padding: 0 6px 0 7px; justify-content: space-between; }
  .nb .car { margin-top: 0; border-width: 4px 4px 0; }
  .vd { width: 2px; height: 10px; margin: 8px 14px 0; background: repeating-linear-gradient(#999 0 2px, transparent 2px 4px); }
  .fx { width: 110px; }
  .f { font: italic 15px "Liberation Serif", serif; fill: #444; }
  .x { font: italic bold 11px "Liberation Serif", serif; fill: #555; }
  .val { width: 117px; margin-left: 3px; padding: 0 4px 0 11px; justify-content: space-between; font-size: 12.500px; }
  .body { display: flex; height: 388px; }
  .sheet { width: 351px; height: 389px; overflow: hidden; border-right: 1px solid #999; border-bottom: 1px solid #999; background: #fff; }
  .sr { display: grid; grid-template-columns: 26px 73px 213px 1fr; height: 20px; font: 13.500px/20px Lato, sans-serif; color: #000; }
  .sr > span { border-right: 1px solid #d4d4d4; border-bottom: 1px solid #d4d4d4; }
  .hd > span { background: #e6e6e6; text-align: center; border-bottom-color: #999; border-right-color: #bbb; line-height: 21px; }
  .hd .c { padding-left: 26px; border-right: 0; }
  .hd .sel { background: #d2d2d2; color: #217346; }
  .corner { padding: 4px 3px 0 10px; }
  .corner i { display: block; margin-left: auto; width: 12px; height: 12px; background: linear-gradient(135deg, transparent 50%, #b2b2b2 50%); }
  .sr .rh { background: #e6e6e6; text-align: center; border-right-color: #999; border-bottom-color: #c6c6c6; letter-spacing: -.6px; }
  .first .rh { background: #d2d2d2; color: #217346; border-right: 2px solid #217346; }
  .ca { text-align: right; padding-right: 2px; letter-spacing: -.8px; }
  .cb { padding-left: 2px; }
  .first b { color: #00007f; }
  .first .ca { padding-right: 4px; letter-spacing: 0; }
  .first .cb { position: relative; outline: 2px solid #217346; outline-offset: -1px; z-index: 1; }
  .hdl { position: absolute; right: -3px; bottom: -3px; width: 6px; height: 6px; background: #217346; border: 1px solid #fff; border-width: 1px 0 0 1px; }
  .vs { width: 15px; height: 389px; margin-left: 3px; padding-top: 2px; display: flex; flex-direction: column; }
  .b { width: 15px; height: 15px; background: #fff; border: 1px solid #ababab; display: grid; place-items: center; flex: none; }
  .vs .t { height: 320px; margin-top: 1px; background: #fff; border: 1px solid #ababab; }
  .vs .k { flex: 1; background: #dadada; }
  .sheets { display: flex; height: 28px; border-bottom: 1px solid #c6c6c6; }
  .arrows { display: flex; gap: 25px; width: 100px; padding: 9px 0 0 27px; }
  .arrows i { opacity: .3; }
  .s1 { width: 54px; height: 25px; margin-top: 0; padding-left: 11px; overflow: hidden; background: #fff; border-left: 1px solid #999; border-bottom: 2px solid #217346; font: bold 12.500px/26px "Open Sans", sans-serif; color: #217346; z-index: 1; }
  .plus { width: 18px; height: 18px; margin: 5px 0 0 32px; }
  .sheets .vd { margin: 9px 0 0 19px; }
  .hs { display: flex; width: 111px; height: 15px; margin: 7px 0 0 15px; }
  .hs .t { width: 50px; background: #fff; border: 1px solid #ababab; }
  .hs .k { flex: 1; background: #dadada; }
  footer { display: flex; height: 22px; background: #f1f1f1; align-items: center; padding-bottom: 1px; }
  .views { display: flex; height: 21px; margin-left: 66px; }
  .views span { width: 38px; display: grid; place-items: center; }
  .views .on { background: #c6c6c6; }
  .zoom { width: 125px; height: 13px; margin-left: 4px; }
  .zt { font-size: 11px; margin: -1px 0 0 14px; }
</style>
